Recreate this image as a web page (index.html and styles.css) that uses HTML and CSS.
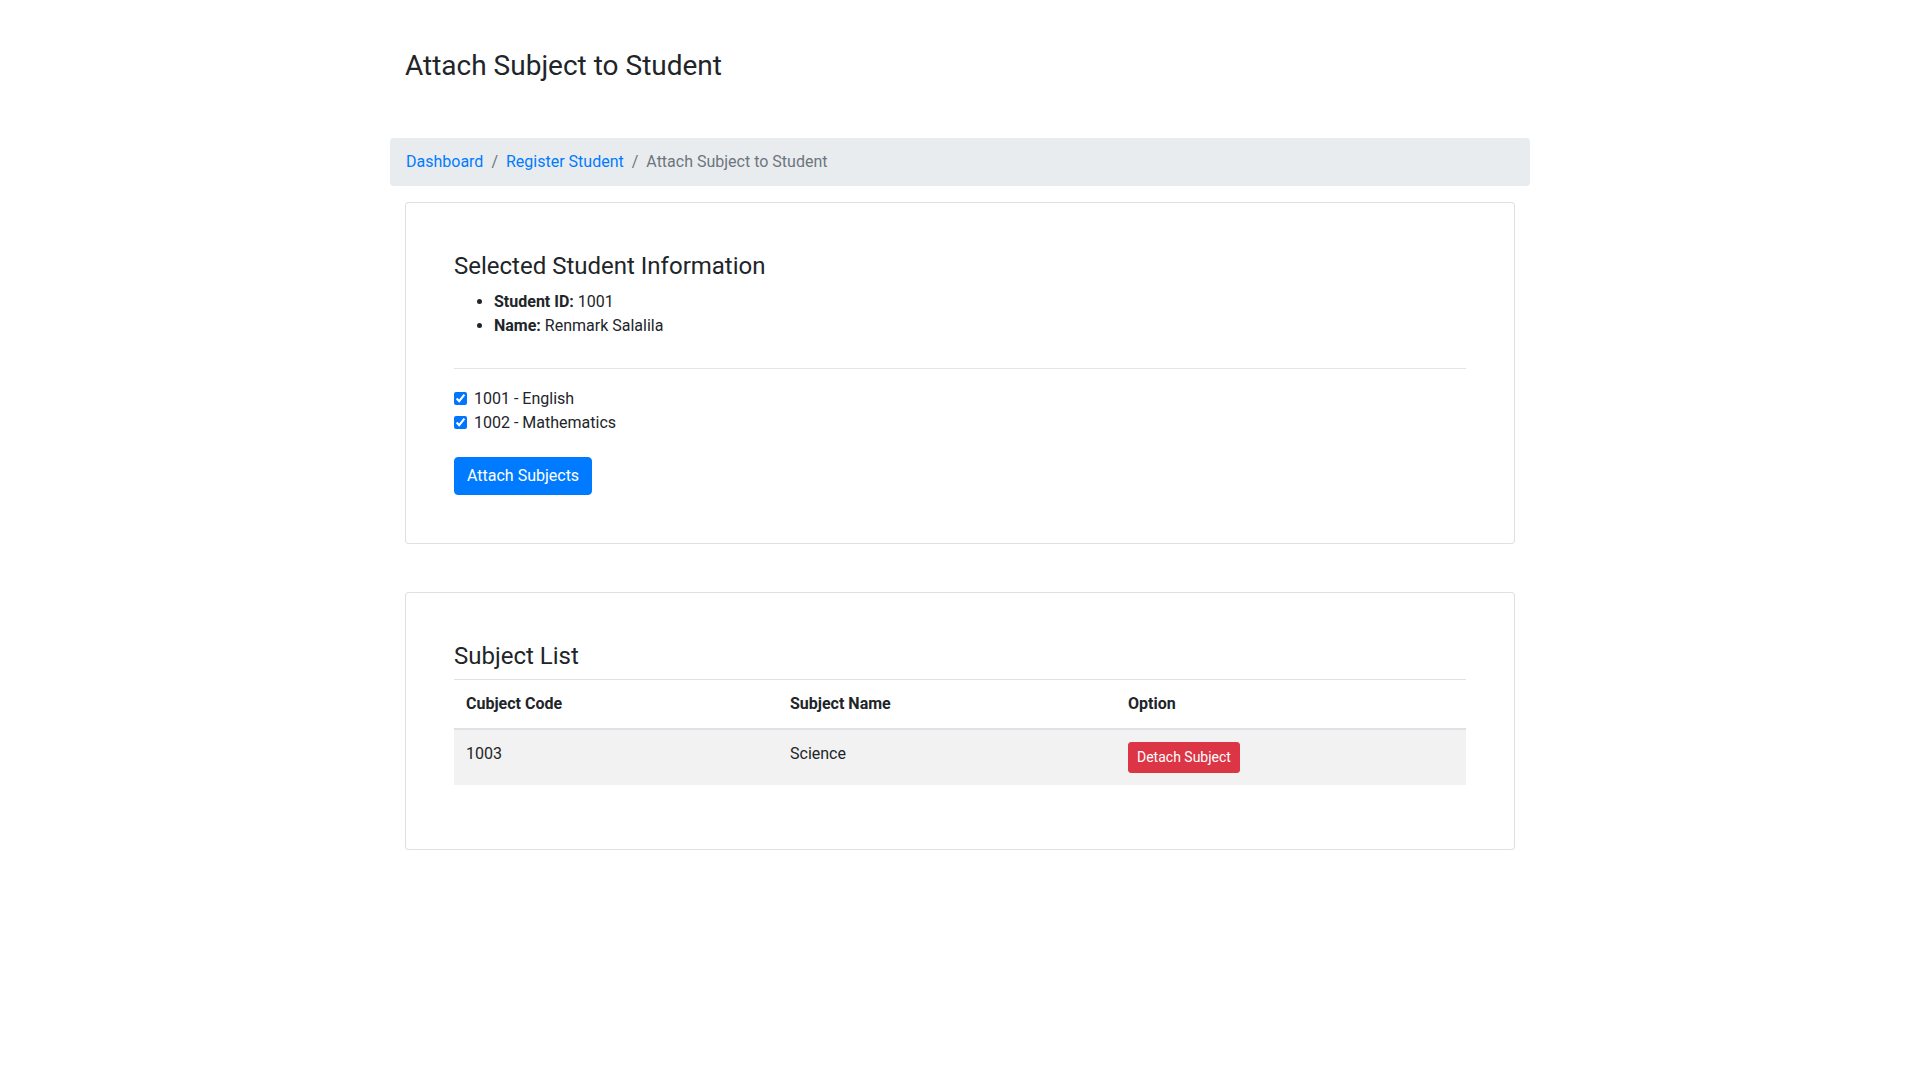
FILE: index.html
```html
<!DOCTYPE html>
<html lang="en">
<head>
<meta charset="utf-8">
<title>Attach Subject to Student</title>
<link rel="stylesheet" href="styles.css">
</head>
<body>
<div class="container">
  <h3 class="page-title">Attach Subject to Student</h3>
  <nav class="breadcrumb">
    <a href="#" class="crumb-link">Dashboard</a>
    <span class="crumb-sep">/</span>
    <a href="#" class="crumb-link">Register Student</a>
    <span class="crumb-sep">/</span>
    <span class="crumb-active">Attach Subject to Student</span>
  </nav>

  <div class="card">
    <div class="card-body">
      <h4 class="card-title">Selected Student Information</h4>
      <ul class="info-list">
        <li><b>Student ID:</b> 1001</li>
        <li><b>Name:</b> Renmark Salalila</li>
      </ul>
      <hr class="divider">
      <form class="subject-form">
        <label class="form-check"><input type="checkbox" class="check" checked><span>1001 - English</span></label>
        <label class="form-check"><input type="checkbox" class="check" checked><span>1002 - Mathematics</span></label>
        <button type="button" class="btn btn-primary">Attach Subjects</button>
      </form>
    </div>
  </div>

  <div class="card card-gap">
    <div class="card-body">
      <h4 class="card-title table-title">Subject List</h4>
      <table class="table">
        <thead>
          <tr>
            <th class="col-code">Cubject Code</th>
            <th class="col-name">Subject Name</th>
            <th>Option</th>
          </tr>
        </thead>
        <tbody>
          <tr class="striped">
            <td>1003</td>
            <td>Science</td>
            <td><button type="button" class="btn btn-danger btn-sm">Detach Subject</button></td>
          </tr>
        </tbody>
      </table>
    </div>
  </div>
</div>
</body>
</html>
```
FILE: styles.css
```css
*{box-sizing:border-box}
html,body{margin:0;padding:0}
body{
  font-family:Roboto,"Liberation Sans",sans-serif;
  font-size:16px;
  line-height:1.5;
  color:#212529;
  background:#fff;
}
.container{
  width:1140px;
  margin:0 auto;
  padding-top:49px;
}
.page-title{
  font-size:28px;
  font-weight:400;
  line-height:1.2;
  margin:0 0 55px 15px;
}
.breadcrumb{
  display:flex;
  align-items:center;
  padding:12px 16px;
  background:#e9ecef;
  border-radius:4px;
  margin:0 0 16px 0;
  height:48px;
}
.crumb-link{color:#007bff;text-decoration:none}
.crumb-sep{color:#6c757d;padding:0 8px}
.crumb-active{color:#6c757d}

.card{
  margin:0 15px;
  border:1px solid rgba(0,0,0,.125);
  border-radius:4px;
  background:#fff;
}
.card-gap{margin-top:48px}
.card-body{padding:49px 48px 48px}
.card-title{
  font-size:24px;
  font-weight:400;
  line-height:1.2;
  margin:0 0 10px 0;
}
.table-title{margin-bottom:8px}
.info-list{
  margin:0 0 30px 0;
  padding-left:40px;
}
.info-list b{font-weight:700}
.divider{
  margin:16px 0 18px;
  border:0;
  border-top:1px solid rgba(0,0,0,.1);
}
.subject-form{display:flex;flex-direction:column;align-items:flex-start}
.form-check{
  display:flex;
  align-items:flex-start;
  line-height:24px;
}
.check{
  width:13px;height:13px;
  margin:5px 7px 0 0;
  accent-color:#0075ff;
}
.btn{
  font-family:inherit;
  display:inline-block;
  font-weight:400;
  text-align:center;
  border:1px solid transparent;
  cursor:pointer;
}
.btn-primary{
  margin-top:22px;
  color:#fff;
  background:#007bff;
  border-color:#007bff;
  font-size:16px;
  line-height:24px;
  padding:6px 12px;
  border-radius:4px;
}
.btn-danger{
  color:#fff;
  background:#dc3545;
  border-color:#dc3545;
}
.btn-sm{
  font-size:14px;
  line-height:21px;
  padding:4px 8px;
  border-radius:3px;
}
.table{
  width:100%;
  border-collapse:collapse;
  margin-bottom:16px;
}
.table th,.table td{
  padding:12px;
  text-align:left;
  vertical-align:top;
  border-top:1px solid #dee2e6;
}
.table th{font-weight:700}
.table thead th{
  vertical-align:bottom;
  border-bottom:2px solid #dee2e6;
}
.col-code{width:324px}
.col-name{width:338px}
.striped{background:rgba(0,0,0,.05)}
.table td{line-height:24px}
```
